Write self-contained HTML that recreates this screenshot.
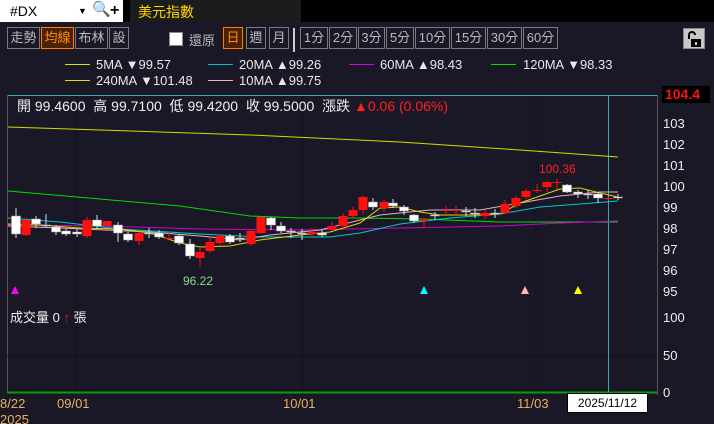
<!DOCTYPE html>
<html><head><meta charset="utf-8"><style>
*{margin:0;padding:0;box-sizing:border-box}
body{width:714px;height:424px;background:#1a1826;overflow:hidden;position:relative;font-family:"Liberation Sans","Noto Sans CJK TC",sans-serif;color:#ddd}
.a{position:absolute;white-space:nowrap}
.btn{position:absolute;top:27px;height:22px;border:1px solid #7a7a7a;color:#bbb;font-size:13px;line-height:20px;text-align:center}
.sel{border-color:#ff7f00;background:#4a2200;color:#ff8c1a}
.lg{position:absolute;font-size:13px;color:#e8e8e8}
.ln{position:absolute;width:25px;height:1px}
</style></head><body>
<div class="a" style="left:0;top:0;width:714px;height:22px;background:#000"></div>
<div class="a" style="left:0;top:0;width:123px;height:22px;background:#fff;color:#000;font-size:14px;line-height:22px;padding-left:10px">#DX<span style="position:absolute;left:78px;font-size:9px">▼</span><span style="position:absolute;left:92px;top:-1px;font-size:15px;color:#666">🔍</span><span style="position:absolute;left:110px;font-weight:bold;font-size:16px">+</span></div>
<div class="a" style="left:130px;top:0;width:171px;height:22px;background:#1c1c1c;color:#ffd700;font-size:14px;line-height:24px;padding-left:8px">美元指數</div>

<div class="btn" style="left:7px;width:33px">走勢</div>
<div class="btn sel" style="left:41px;width:33px">均線</div>
<div class="btn" style="left:75px;width:33px">布林</div>
<div class="btn" style="left:109px;width:20px">設</div>
<div class="a" style="left:169px;top:32px;width:14px;height:14px;background:#fff;border:1px solid #888"></div>
<div class="a" style="left:189px;top:30px;font-size:13px;color:#bbb">還原</div>
<div class="btn sel" style="left:223px;width:20px">日</div>
<div class="btn" style="left:246px;width:20px">週</div>
<div class="btn" style="left:269px;width:20px">月</div>
<div class="a" style="left:293px;top:28px;width:2px;height:24px;background:#ccc"></div>
<div class="btn" style="left:300px;width:28px">1分</div>
<div class="btn" style="left:329px;width:28px">2分</div>
<div class="btn" style="left:358px;width:27px">3分</div>
<div class="btn" style="left:386px;width:28px">5分</div>
<div class="btn" style="left:415px;width:35px">10分</div>
<div class="btn" style="left:451px;width:35px">15分</div>
<div class="btn" style="left:487px;width:35px">30分</div>
<div class="btn" style="left:523px;width:35px">60分</div>
<div class="a" style="left:683px;top:28px;width:22px;height:21px;background:#c8c8c8;border:1px solid #888"><svg width="22" height="21"><path d="M5 10V6a3 3 0 0 1 6 0" stroke="#000" stroke-width="2" fill="none"/><rect x="7" y="10" width="10" height="8" fill="#000"/><rect x="11" y="13" width="2" height="3" fill="#c8c8c8"/></svg></div>

<div class="ln" style="left:65px;top:64px;background:#e0e000"></div><div class="lg" style="left:96px;top:57px">5MA ▼99.57</div>
<div class="ln" style="left:208px;top:64px;background:#00c8d0"></div><div class="lg" style="left:239px;top:57px">20MA ▲99.26</div>
<div class="ln" style="left:349px;top:64px;background:#e000e0"></div><div class="lg" style="left:380px;top:57px">60MA ▲98.43</div>
<div class="ln" style="left:491px;top:64px;background:#00e000"></div><div class="lg" style="left:523px;top:57px">120MA ▼98.33</div>
<div class="ln" style="left:65px;top:80px;background:#e0e000"></div><div class="lg" style="left:96px;top:73px">240MA ▼101.48</div>
<div class="ln" style="left:208px;top:80px;background:#f0b0c0"></div><div class="lg" style="left:239px;top:73px">10MA ▲99.75</div>

<svg class="a" style="left:0;top:0" width="714" height="424">
<line x1="7" y1="95.5" x2="657" y2="95.5" stroke="#3aa8b0"/>
<line x1="7.5" y1="95" x2="7.5" y2="392" stroke="#555"/>
<line x1="657.5" y1="95" x2="657.5" y2="395" stroke="#555"/>
<g stroke="#101018"><line x1="77" y1="96" x2="77" y2="392"/><line x1="302" y1="96" x2="302" y2="392"/><line x1="536" y1="96" x2="536" y2="392"/><line x1="7" y1="355.5" x2="657" y2="355.5"/></g>
<line x1="7" y1="392.5" x2="657" y2="392.5" stroke="#00a000" stroke-width="2"/>
<line x1="608.5" y1="96" x2="608.5" y2="392" stroke="#3aa8b0"/>
<polyline fill="none" stroke="#d8d800" points="8,127 100,130 250,135 400,142 520,150 618,157"/>
<polyline fill="none" stroke="#00dd00" points="8,191 100,199 180,206 250,216 300,218 360,218 420,219 500,222 618,222"/>
<polyline fill="none" stroke="#d000d0" points="8,225 100,226 200,229 300,230 400,228 500,226 560,223 618,221"/>
<polyline fill="none" stroke="#00c8d0" points="8,218 60,222 120,229 200,234 260,237 330,237 360,233 400,224 450,218 500,214 540,207 580,204 618,201"/>
<polyline fill="none" stroke="#e8b0c0" points="8,226 60,228 150,232 200,236 240,240 270,235 320,230 380,215 430,210 480,210 520,203 560,196 600,192 618,192"/>
<polyline fill="none" stroke="#d8d800" points="8,224 40,225 80,228 120,229 150,233 180,243 200,247 230,246 260,240 300,235 330,232 360,223 380,208 400,207 420,212 440,215 470,215 500,214 520,203 540,196 560,189 580,188 600,193 618,197"/>
<g id="c"></g>
<text x="183" y="285" fill="#88dd88" font-size="12">96.22</text>
<text x="539" y="173" fill="#ff2020" font-size="12">100.36</text>
<g font-size="9"><polygon points="11,294 15,286 19,294" fill="#ff00ff"/><polygon points="420,294 424,286 428,294" fill="#00ffff"/><polygon points="521,294 525,286 529,294" fill="#ffb6c1"/><polygon points="574,294 578,286 582,294" fill="#ffff00"/></g>
<g fill="#eee" font-size="13"><text x="663" y="128">103</text><text x="663" y="149">102</text><text x="663" y="170">101</text><text x="663" y="191">100</text><text x="663" y="212">99</text><text x="663" y="233">98</text><text x="663" y="254">97</text><text x="663" y="275">96</text><text x="663" y="296">95</text><text x="663" y="322">100</text><text x="663" y="360">50</text><text x="663" y="397">0</text></g>
<g fill="#e8b060" font-size="13"><text x="0" y="408">8/22</text><text x="57" y="408">09/01</text><text x="283" y="408">10/01</text><text x="517" y="408">11/03</text><text x="0" y="424">2025</text></g>
</svg>
<div class="a" style="left:662px;top:86px;width:48px;height:17px;background:#000;color:#ff1010;font-weight:bold;font-size:14px;line-height:17px;padding-left:3px">104.4</div>
<div class="a" style="left:7px;top:96px;font-size:14px;color:#f0f0f0;padding-left:10px">開 99.4600&nbsp; 高 99.7100&nbsp; 低 99.4200&nbsp; 收 99.5000&nbsp; 漲跌 <span style="color:#ff2020">▲0.06 (0.06%)</span></div>
<div class="a" style="left:10px;top:307px;font-size:13px;color:#eee">成交量 0 <span style="color:#cc2020">↑</span> 張</div>
<div class="a" style="left:567px;top:393px;width:81px;height:20px;background:#fff;border:1px solid #000;color:#000;font-size:12px;line-height:18px;text-align:center">2025/11/12</div>
<script>
var d=[[16,216,234,'w',208,238],[26,220,235,'r',218,236],[36,219,224,'w',216,228],[46,225,226,'w',214,227],[56,227,232,'w',225,235],[66,231,234,'w',229,236],[77,232,234,'w',229,237],[87,220,236,'r',217,238],[97,220,226,'w',215,229],[107,221,226,'r',221,226],[118,225,233,'w',222,242],[128,234,240,'w',232,242],[139,233,241,'r',232,245],[149,233,234,'w',228,238],[159,233,237,'w',230,239],[169,238,239,'r',233,240],[179,236,243,'w',234,245],[190,244,256,'w',239,259],[200,252,258,'r',248,267],[210,242,251,'r',238,253],[220,236,243,'r',234,245],[230,236,242,'w',234,244],[240,238,239,'w',233,242],[251,231,244,'r',230,246],[261,217,233,'r',217,234],[271,218,225,'w',217,230],[281,226,231,'w',222,233],[291,231,232,'w',228,238],[302,233,234,'w',229,240],[312,232,234,'r',228,237],[322,233,235,'w',230,237],[332,226,229,'r',222,231],[343,216,226,'r',213,228],[353,210,216,'r',207,218],[363,197,210,'r',196,214],[373,202,207,'w',198,210],[384,202,208,'r',200,212],[393,203,206,'w',199,208],[404,207,211,'w',205,215],[414,215,221,'w',214,223],[424,219,221,'r',218,228],[435,215,216,'w',212,220],[446,210,211,'r',206,215],[456,210,211,'r',206,215],[466,211,212,'w',207,216],[475,213,214,'w',208,218],[485,213,216,'r',210,219],[495,213,214,'w',209,218],[505,204,213,'r',200,214],[516,198,206,'r',196,208],[526,191,197,'r',189,199],[537,190,191,'r',184,193],[547,182,187,'r',181,192],[557,182,183,'r',179,189],[567,185,192,'w',184,193],[578,192,194,'w',190,198],[588,194,195,'w',190,199],[598,194,198,'w',192,203],[608,198,199,'r',197,200],[618,197,198,'w',194,200]];
var s='';d.forEach(function(c){var f=c[3]=='r'?'#ff1010':'#fff';s+='<line x1="'+c[0]+'" y1="'+c[4]+'" x2="'+c[0]+'" y2="'+c[5]+'" stroke="'+(c[3]=='r'?'#ff1010':'#ddd')+'"/><rect x="'+(c[0]-4.5)+'" y="'+c[1]+'" width="9" height="'+Math.max(1,c[2]-c[1])+'" fill="'+f+'"'+(c[3]=='w'?' stroke="#999" stroke-width="0.5"':'')+'/>';});
document.getElementById('c').innerHTML=s;
</script>
</body></html>
